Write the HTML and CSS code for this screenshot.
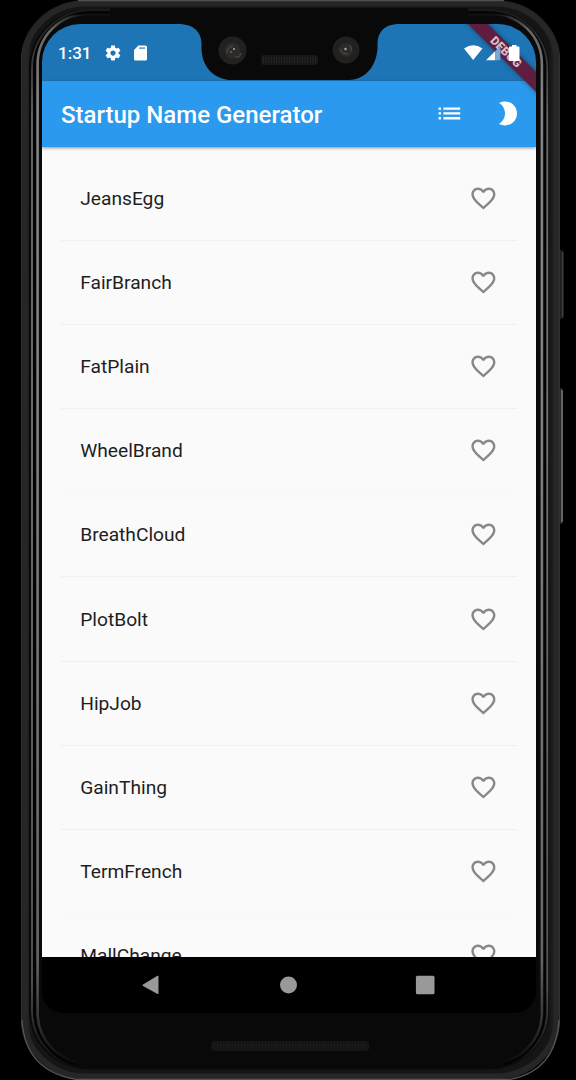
FILE: index.html
```html
<!DOCTYPE html>
<html lang="en">
<head>
<meta charset="utf-8">
<title>Startup Name Generator</title>
<link rel="stylesheet" href="styles.css">
</head>
<body>
<svg class="defs" width="0" height="0" aria-hidden="true">
  <symbol id="heart" viewBox="0 0 24 24"><path d="M16.5 3c-1.74 0-3.41.81-4.5 2.09C10.91 3.81 9.24 3 7.5 3 4.42 3 2 5.42 2 8.5c0 3.78 3.4 6.86 8.55 11.54L12 21.35l1.45-1.32C18.6 15.36 22 12.28 22 8.5 22 5.42 19.58 3 16.5 3zm-4.4 15.55l-.1.1-.1-.1C7.14 14.24 4 11.39 4 8.5 4 6.5 5.5 5 7.5 5c1.54 0 3.04.99 3.57 2.36h1.87C13.46 5.99 14.96 5 16.5 5c2 0 3.5 1.5 3.5 3.5 0 2.89-3.14 5.74-7.9 10.05z"/></symbol>
</svg>
<div class="stage">
  <svg class="frame" viewBox="0 0 576 1080" aria-hidden="true">
    <defs>
      <linearGradient id="outer" x1="0" x2="1" y1="0" y2="0">
        <stop offset="0" stop-color="#3c3c3c"/><stop offset=".008" stop-color="#292929"/><stop offset=".02" stop-color="#151515"/>
        <stop offset=".98" stop-color="#151515"/><stop offset=".992" stop-color="#242424"/><stop offset="1" stop-color="#444"/>
      </linearGradient>
      <linearGradient id="shineA" x1="0" x2="0" y1="0" y2="1">
        <stop offset="0" stop-color="#1c1c1c"/><stop offset=".04" stop-color="#333"/><stop offset=".1" stop-color="#6a6a6a"/>
        <stop offset=".4" stop-color="#777"/><stop offset=".92" stop-color="#555"/><stop offset=".97" stop-color="#222"/><stop offset="1" stop-color="#0a0a0a"/>
      </linearGradient>
      <linearGradient id="shineB" x1="0" x2="0" y1="0" y2="1">
        <stop offset="0" stop-color="#0a0a0a"/><stop offset=".003" stop-color="#303030"/><stop offset=".015" stop-color="#656565"/><stop offset=".08" stop-color="#858585"/>
        <stop offset=".4" stop-color="#808080"/><stop offset=".9" stop-color="#666"/><stop offset=".96" stop-color="#333"/><stop offset="1" stop-color="#0a0a0a"/>
      </linearGradient>
    </defs>
    <path d="M558 250h3q3 0 3 4v61q0 4-3 4h-3z" fill="#202020"/><path d="M562.5 252v65" stroke="#404040"/>
    <path d="M558 388h3q2 0 2 4v128q0 4-2 4h-3z" fill="#262626"/><path d="M562 390v132" stroke="#868686" stroke-width="1.3"/>
    <rect x="21" y="0" width="539" height="1080" rx="64" ry="60" fill="url(#outer)"/>
    <rect x="24.5" y="3.500" width="532" height="1073" rx="61" ry="57" fill="none" stroke="#262626" stroke-width="6"/>
    <path d="M78 .6H504" stroke="#505050" stroke-width="1.2"/>
    <path d="M22 1020Q25 1071 76 1079.300H510Q556 1071 559 1020" fill="none" stroke="#555" stroke-width="1.3"/>
    <rect x="29" y="10" width="520" height="1059" rx="58" fill="#090909"/>
    <rect x="32" y="10.5" width="515.3" height="1058" rx="58" fill="none" stroke="url(#shineA)" stroke-width="1.8"/>
    <rect x="34.7" y="12.5" width="509.5" height="1054" rx="56" fill="none" stroke="#030303" stroke-width="2.6"/>
    <rect x="37.6" y="14" width="504.3" height="1049" rx="50" fill="none" stroke="url(#shineB)" stroke-width="2.6"/>
    <path d="M110 8H468V24H110zM76 1040H504V1068H76z" fill="#090909"/>
    <rect x="211" y="1041" width="158" height="10" rx="3" fill="#151515"/>
    <path d="M214 1046H367" stroke="#1c1c1c" stroke-width="5" stroke-dasharray="1 2"/>
  </svg>

  <div class="screen">
    <div class="status">
      <span class="clock">1:31</span>
      <svg class="gear" viewBox="0 0 24 24"><path d="M19.43 12.98c.04-.32.07-.64.07-.98s-.03-.66-.07-.98l2.11-1.65c.19-.15.24-.42.12-.64l-2-3.46c-.12-.22-.39-.3-.61-.22l-2.49 1c-.52-.4-1.08-.73-1.69-.98l-.38-2.65C14.46 2.18 14.25 2 14 2h-4c-.25 0-.46.18-.49.42l-.38 2.65c-.61.25-1.17.59-1.69.98l-2.49-1c-.23-.09-.49 0-.61.22l-2 3.46c-.13.22-.07.49.12.64l2.11 1.65c-.04.32-.07.65-.07.98s.03.66.07.98l-2.11 1.65c-.19.15-.24.42-.12.64l2 3.46c.12.22.39.3.61.22l2.49-1c.52.4 1.08.73 1.69.98l.38 2.65c.03.24.24.42.49.42h4c.25 0 .46-.18.49-.42l.38-2.65c.61-.25 1.17-.59 1.69-.98l2.49 1c.23.09.49 0 .61-.22l2-3.46c.12-.22.07-.49-.12-.64l-2.11-1.65zM12 15.5c-1.93 0-3.500-1.570-3.500-3.500s1.570-3.500 3.500-3.500 3.500 1.570 3.500 3.500-1.570 3.500-3.500 3.500z"/></svg>
      <svg class="card" viewBox="0 0 13 16"><path d="M4.400.5H11.500Q13 .5 13 2V14Q13 15.500 11.500 15.500H1.500Q0 15.500 0 14V5z"/><path class="pins" d="M5 2.200H11V4H5z"/></svg>
      <svg class="signals" viewBox="0 0 56 18">
        <path d="M0 4.500Q9.200-2 18.400 4.500L9.200 16z"/>
        <path d="M31.300 7V16.200H22z"/><path class="weak" d="M31.300 7L36.300 2V16.200H31.300z"/>
        <path d="M46 2.500h2V1h4.500v1.500h2q1 0 1 1V16q0 1-1 1h-8.500q-1 0-1-1V3.500q0-1 1-1z"/>
      </svg>
    </div>
    <header class="appbar">
      <h1>Startup Name Generator</h1>
      <svg class="action" viewBox="0 0 24 24"><path d="M3 13h2v-2H3v2zm0 4h2v-2H3v2zm0-8h2V7H3v2zm4 4h14v-2H7v2zm0 4h14v-2H7v2zM7 7v2h14V7H7z"/></svg>
      <svg class="action" viewBox="0 0 24 24"><path d="M10 2c-1.820 0-3.530.5-5 1.350C7.990 5.080 10 8.300 10 12s-2.010 6.920-5 8.650C6.470 21.500 8.180 22 10 22c5.520 0 10-4.480 10-10S15.520 2 10 2z"/></svg>
    </header>
    <main class="list">
      <div class="row"><span>JeansEgg</span><svg><use href="#heart"/></svg></div>
      <div class="row"><span>FairBranch</span><svg><use href="#heart"/></svg></div>
      <div class="row"><span>FatPlain</span><svg><use href="#heart"/></svg></div>
      <div class="row faint"><span>WheelBrand</span><svg><use href="#heart"/></svg></div>
      <div class="row"><span>BreathCloud</span><svg><use href="#heart"/></svg></div>
      <div class="row"><span>PlotBolt</span><svg><use href="#heart"/></svg></div>
      <div class="row"><span>HipJob</span><svg><use href="#heart"/></svg></div>
      <div class="row"><span>GainThing</span><svg><use href="#heart"/></svg></div>
      <div class="row faint"><span>TermFrench</span><svg><use href="#heart"/></svg></div>
      <div class="row"><span>MallChange</span><svg><use href="#heart"/></svg></div>
    </main>
    <nav class="navbar">
      <svg viewBox="0 0 20 20"><path d="M17.500 1.500V18.500Q17.500 19.300 16.500 19L2 11Q.6 10.200 2 9.400L16.500.8Q17.500.5 17.500 1.500z"/></svg>
      <svg viewBox="0 0 20 20"><circle cx="10.500" cy="10" r="8.500"/></svg>
      <svg viewBox="0 0 20 20"><rect x=".9" y=".8" width="18.600" height="18.400" rx="1.500"/></svg>
    </nav>
    <div class="banner"><span>DEBUG</span></div>
  </div>

  <svg class="notch" viewBox="0 0 216 58" aria-hidden="true">
    <path d="M0 0H216V1C203 2 197 9 196.500 20V26C195 44 184 56.500 168 57H49C33 56 21 44 20.500 26V20C20 9 13 2 0 1z" fill="#090909"/>
    <g fill="#22211f"><circle cx="51.500" cy="27.500" r="14"/><circle cx="165" cy="27" r="13.500"/></g>
    <g fill="#2c2b29"><circle cx="51.500" cy="27.500" r="8"/><circle cx="165" cy="27" r="7"/></g>
    <g fill="none" stroke="#45433f" stroke-width="1.500"><path d="M46 30q0-6 6-7M54 34q5 1 6-4M159 26q2 5 8 5M168 22q3 2 2 6"/></g>
    <g fill="#aaa"><circle cx="53" cy="26" r="1"/><circle cx="164.500" cy="26" r="1.200"/><circle cx="50" cy="29" r=".7"/></g>
    <rect x="80" y="32" width="57" height="10" rx="2" fill="#151515"/>
    <path d="M82 37H136" stroke="#262626" stroke-width="7" stroke-dasharray="1 1.600"/>
  </svg>
</div>
</body>
</html>
```
FILE: styles.css
```css
* { box-sizing: border-box; }
body { margin: 0; background: #000; font-family: Roboto, "Liberation Sans", sans-serif; }
svg { display: block; flex: none; }
.defs { position: absolute; }
.stage { position: relative; width: 576px; height: 1080px; overflow: hidden; padding: 24px 40px 0 42px; }
.frame { position: absolute; inset: 0; width: 576px; height: 1080px; }
.screen {
  position: relative; width: 494px; height: 989px; display: flex; flex-direction: column;
  overflow: hidden; border-radius: 38px 38px 22px 22px; background: #000;
}
.status {
  height: 57px; flex: none; display: flex; align-items: center;
  padding: 0 16px 0 16px; background: #1d75b5; color: #fff; fill: #fff;
}
.clock { width: 46px; font-size: 17px; font-weight: 500; }
.gear { width: 18px; height: 18px; margin: 0 11.500px 0 0; }
.card { width: 13px; height: 16px; }
.card .pins { fill: #6ba6d2; }
.signals { position: relative; z-index: 2; width: 56px; height: 18px; margin-left: auto; }
.signals .weak { fill: #78a9d0; }
.appbar {
  position: relative; height: 65.500px; flex: none; display: flex; align-items: center;
  padding: 0 14px 0 19px; background: #2b99ed; color: #fff; fill: #fff;
  box-shadow: 0 1px 3px rgba(40, 40, 60, .5);
}
.appbar h1 { margin: 0; flex: 1; font-size: 24px; font-weight: 500; line-height: 30px; padding-top: 2px; white-space: nowrap; }
.action { width: 28.800px; height: 28.800px; margin-left: 29px; }
.list { height: 810px; flex: none; overflow: hidden; padding: 10.200px 19px 0; background: #fafafa; }
.row {
  height: 84.170px; display: flex; align-items: center; justify-content: space-between;
  padding: 0 19.200px; border-bottom: 1px solid #f0f0f0; font-size: 19.200px; color: #1e1e1e;
}
.row.faint { border-color: #f8f8f8; }
.row svg { width: 28.800px; height: 28.800px; fill: #888; }
.navbar {
  height: 56.500px; flex: none; display: flex; justify-content: space-between; align-items: center;
  padding: 0 101px 0 99px; background: #000; fill: #999;
}
.navbar svg { width: 20px; height: 20px; }
.banner {
  position: absolute; z-index: 1; left: 404px; top: 20.500px; width: 120px; height: 14px;
  transform: rotate(45deg); background: #611d3f; color: #d5bdc8;
  box-shadow: 0 0 5px rgba(0, 0, 0, .4); text-align: center;
}
.banner span { display: block; font-size: 12px; line-height: 14px; font-weight: 900; }
.notch { position: absolute; left: 181px; top: 23px; width: 216px; height: 58px; }
```
